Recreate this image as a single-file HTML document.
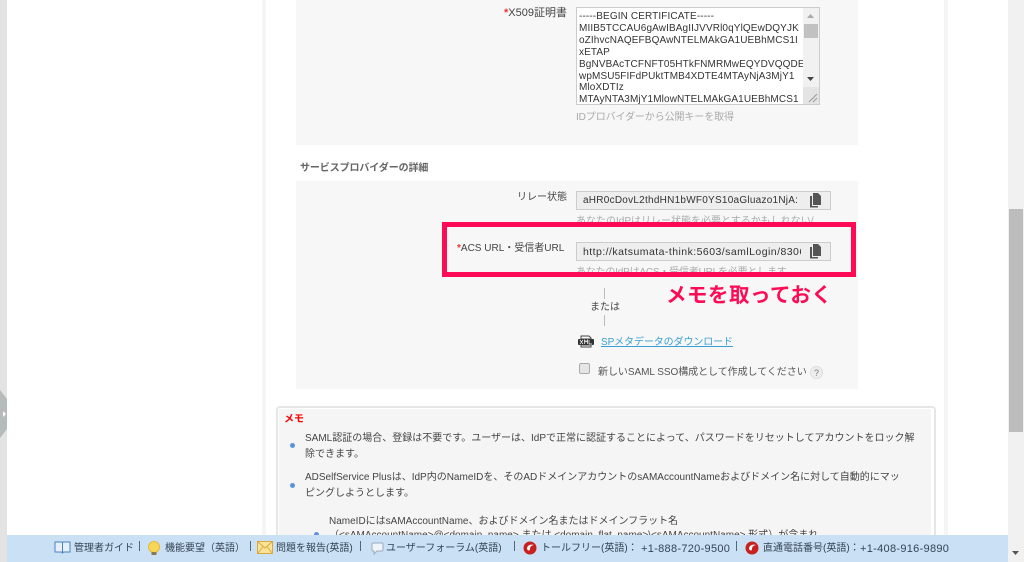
<!DOCTYPE html>
<html lang="ja"><head><meta charset="utf-8"><title>SAML</title>
<style>
html,body{margin:0;padding:0;width:1024px;height:562px;overflow:hidden;background:#fff}
body{position:relative;font-family:"Liberation Sans","Noto Sans CJK JP",sans-serif;font-size:10px;color:#444;filter:blur(.3px)}
.a{position:absolute;white-space:nowrap}
.r{color:#e33;font-weight:bold}
.ro{position:absolute;left:576px;width:253px;height:17px;background:#eee;border:1px solid #ccc;box-sizing:content-box;font-size:10px;line-height:18px;color:#333}
.ro span{position:absolute;left:6px;top:0;width:218px;overflow:hidden;white-space:nowrap;letter-spacing:.25px}
.ro svg{position:absolute;left:232px;top:1px}
.g{color:#aaa}
.foot{position:absolute;left:7px;top:535px;width:1001px;height:27px;background:#cae0f4}
.f{position:absolute;top:549px;transform:translateY(-50%);white-space:nowrap;font-size:10px;color:#345;line-height:12px}
.n{font-size:11px;letter-spacing:.3px}
.sep{position:absolute;top:541px;width:1px;height:10px;background:#567}
.dot{position:absolute;width:5px;height:5px;border-radius:50%;background:#5c92d8}
</style></head><body>
<div class="a" style="left:0;top:0;width:7px;height:562px;background:#e3e3e3"></div>
<svg class="a" style="left:0;top:390px" width="8" height="48"><path d="M0 0L7 9V39L0 48Z" fill="#b5bbbb"/><path d="M3 21L6 24L3 27Z" fill="#fff"/></svg>
<div class="a" style="left:262px;top:0;width:4px;height:562px;background:#f5f5f5"></div>
<div class="a" style="left:944px;top:0;width:4px;height:562px;background:#f5f5f5"></div>
<div class="a" style="left:1008px;top:0;width:16px;height:562px;background:#f1f1f1"></div>
<div class="a" style="left:1009px;top:209px;width:14px;height:223px;background:#bcbcbc"></div>
<svg class="a" style="left:1011px;top:550px" width="10" height="6"><path d="M1 1H8L4.500 5Z" fill="#555"/></svg>

<div class="a" style="left:296px;top:0;width:562px;height:145px;background:#f7f7f7"></div>
<div class="a" style="left:504px;top:7px;font-size:11px;line-height:13px"><span class="r">*</span>X509証明書</div>
<div class="a" style="left:576px;top:7px;width:242px;height:96px;background:#fff;border:1px solid #ccc;overflow:hidden">
  <div class="a" style="left:2px;top:3px;font-size:10px;line-height:11.900px;color:#333;letter-spacing:.12px">-----BEGIN CERTIFICATE-----<br>MIIB5TCCAU6gAwIBAgIIJVVRl0qYlQEwDQYJK<br>oZIhvcNAQEFBQAwNTELMAkGA1UEBhMCS1I<br>xETAP<br>BgNVBAcTCFNFT05HTkFNMRMwEQYDVQQDE<br>wpMSU5FIFdPUktTMB4XDTE4MTAyNjA3MjY1<br>MloXDTIz<br>MTAyNTA3MjY1MlowNTELMAkGA1UEBhMCS1</div>
  <div class="a" style="left:226px;top:0;width:16px;height:96px;background:#f1f1f1"></div>
  <div class="a" style="left:227px;top:16px;width:14px;height:14px;background:#c1c1c1"></div>
  <svg class="a" style="left:229px;top:5px" width="10" height="6"><path d="M1 5H8L4.500 1Z" fill="#aaa"/></svg>
  <svg class="a" style="left:229px;top:68px" width="10" height="6"><path d="M1 1H8L4.500 5Z" fill="#444"/></svg>
  <div class="a" style="left:226px;top:79px;width:16px;height:17px;background:#e4e4e4"></div>
  <svg class="a" style="left:229px;top:83px" width="13" height="13"><path d="M3 11L11 3M7 11L11 7" stroke="#999" fill="none"/></svg>
</div>
<div class="a g" style="left:576px;top:111px;line-height:13px;letter-spacing:-.1px">IDプロバイダーから公開キーを取得</div>

<div class="a" style="left:300px;top:162px;font-weight:bold;color:#666;line-height:13px;letter-spacing:-.1px">サービスプロバイダーの詳細</div>
<div class="a" style="left:296px;top:181px;width:562px;height:208px;background:#f7f7f7"></div>

<div class="a" style="left:517px;top:191px;line-height:13px">リレー状態</div>
<div class="ro" style="top:191px"><span>aHR0cDovL2thdHN1bWF0YS10aGluazo1NjA:</span>
<svg width="13" height="15" viewBox="0 0 13 15"><path d="M4 0H9L12 3V12H4Z" fill="#555"/><path d="M1 3H3V13H9V14.500H1Z" fill="#555"/></svg></div>
<div class="a g" style="left:576px;top:215px;line-height:13px">あなたのIdPはリレー状態を必要とするかもしれない/</div>

<div class="a" style="left:457px;top:242px;line-height:13px"><span class="r">*</span>ACS URL・受信者URL</div>
<div class="ro" style="top:242px"><span style="font-size:10.500px;letter-spacing:.45px">http://katsumata-think:5603/samlLogin/83064a1</span>
<svg width="13" height="15" viewBox="0 0 13 15"><path d="M4 0H9L12 3V12H4Z" fill="#555"/><path d="M1 3H3V13H9V14.500H1Z" fill="#555"/></svg></div>
<div class="a g" style="left:576px;top:266px;line-height:13px;letter-spacing:-.2px">あなたのIdPはACS・受信者URLを必要とします</div>

<div class="a" style="left:442px;top:222px;width:404px;height:45px;border:5px solid #fe0a55"></div>
<div class="a" style="left:666px;top:285px;font-size:20.500px;line-height:22px;font-weight:bold;color:#fe0a55;letter-spacing:.5px">メモを取っておく</div>

<div class="a" style="left:604px;top:288px;width:1px;height:11px;background:#bbb"></div>
<div class="a" style="left:590px;top:301px;line-height:13px">または</div>
<div class="a" style="left:604px;top:315px;width:1px;height:11px;background:#bbb"></div>

<svg class="a" style="left:578px;top:335px" width="16" height="13" viewBox="0 0 16 13"><path d="M3 3V1H11L13 3V4H3ZM3 10H13V12H3Z" fill="none" stroke="#444"/><rect x="0" y="4" width="16" height="6" rx="1" fill="#333"/><path d="M2 5L5 9M5 5L2 9M6.500 9V5L8 7L9.500 5V9M11 5V9H14" stroke="#fff" stroke-width=".7" fill="none"/></svg>
<div class="a" style="left:601px;top:336px;line-height:13px;color:#3aa0d4;text-decoration:underline;letter-spacing:-.1px">SPメタデータのダウンロード</div>

<div class="a" style="left:579px;top:363px;width:9px;height:9px;background:#e6e6e6;border:1px solid #aaa;border-radius:2px"></div>
<div class="a" style="left:598px;top:366px;line-height:13px;color:#555;letter-spacing:-.05px">新しいSAML SSO構成として作成してください</div>
<div class="a" style="left:810px;top:366px;width:11px;height:11px;border:1px solid #ddd;border-radius:50%;background:#eee;font-size:9px;line-height:12px;text-align:center;color:#777">?</div>

<div class="a" style="left:276px;top:406px;width:656px;height:140px;border:2px solid #e6e6e6;border-radius:4px;background:#fff"></div>
<div class="a" style="left:279px;top:409px;width:652px;height:130px;background:#f5f5f5"></div>
<div class="a" style="left:284px;top:413px;font-weight:bold;color:#f00;line-height:13px">メモ</div>
<div class="dot" style="left:290px;top:443px"></div>
<div class="a" style="left:305px;top:431px;line-height:16px;color:#444">SAML認証の場合、登録は不要です。ユーザーは、IdPで正常に認証することによって、パスワードをリセットしてアカウントをロック解<br>除できます。</div>
<div class="dot" style="left:290px;top:483px"></div>
<div class="a" style="left:305px;top:470px;line-height:16px;color:#444">ADSelfService Plusは、IdP内のNameIDを、そのADドメインアカウントのsAMAccountNameおよびドメイン名に対して自動的にマッ<br>ピングしようとします。</div>
<div class="dot" style="left:314px;top:532px"></div>
<div class="a" style="left:329px;top:515px;line-height:14px;color:#444">NameIDにはsAMAccountName、およびドメイン名またはドメインフラット名<br>（&lt;sAMAccountName&gt;@&lt;domain_name&gt; または &lt;domain_flat_name&gt;\&lt;sAMAccountName&gt; 形式）が含まれ</div>

<div class="foot"></div>
<svg class="a" style="left:54px;top:540px" width="17" height="14" viewBox="0 0 17 14"><path d="M1 2H7.500C8 2 8.500 2.500 8.500 3C8.500 2.500 9 2 9.500 2H16V12H9.500L8.500 13L7.500 12H1Z" fill="#e6f0fa" stroke="#4a82c0"/><path d="M8.500 3V13" stroke="#4a82c0"/></svg>
<div class="f" style="left:74px">管理者ガイド</div>
<div class="sep" style="left:139px"></div>
<svg class="a" style="left:147px;top:541px" width="14" height="15" viewBox="0 0 14 15"><circle cx="7" cy="6" r="5.500" fill="#f9d65a" stroke="#e3b93c"/><rect x="4.500" y="11" width="5" height="3" fill="#8a7a50"/></svg>
<div class="f" style="left:165px">機能要望（英語）</div>
<div class="sep" style="left:250px"></div>
<svg class="a" style="left:257px;top:541px" width="16" height="13" viewBox="0 0 16 13"><rect x=".5" y=".5" width="15" height="12" fill="#fbe39a" stroke="#d9a93a"/><path d="M1 1L8 7L15 1M1 12L6 5.500M15 12L10 5.500" fill="none" stroke="#d9a93a"/></svg>
<div class="f" style="left:276px">問題を報告(英語)</div>
<div class="sep" style="left:360px"></div>
<svg class="a" style="left:369px;top:542px" width="15" height="14" viewBox="0 0 15 14"><path d="M5 1H13Q14 1 14 2V8Q14 9 13 9H8L5 12V9H4Q3 9 3 8V2Q3 1 5 1Z" fill="#eef4fa" stroke="#9ab"/></svg>
<div class="f" style="left:386px">ユーザーフォーラム(英語)</div>
<div class="sep" style="left:514px"></div>
<svg class="a" style="left:523px;top:541px" width="14" height="14" viewBox="0 0 14 14"><circle cx="7" cy="7" r="6.500" fill="#c9201f"/><path d="M4 8C4 4 8 3 11 4C8 4.500 7 6 7 8C7 10 5 10 4 8Z" fill="#fff"/></svg>
<div class="f" style="left:541px">トールフリー(英語)：</div>
<div class="f n" style="left:641px">+1-888-720-9500</div>
<div class="sep" style="left:736px"></div>
<svg class="a" style="left:745px;top:541px" width="14" height="14" viewBox="0 0 14 14"><circle cx="7" cy="7" r="6.500" fill="#c9201f"/><path d="M4 8C4 4 8 3 11 4C8 4.500 7 6 7 8C7 10 5 10 4 8Z" fill="#fff"/></svg>
<div class="f" style="left:763px">直通電話番号(英語)：</div>
<div class="f n" style="left:860px">+1-408-916-9890</div>
</body></html>
